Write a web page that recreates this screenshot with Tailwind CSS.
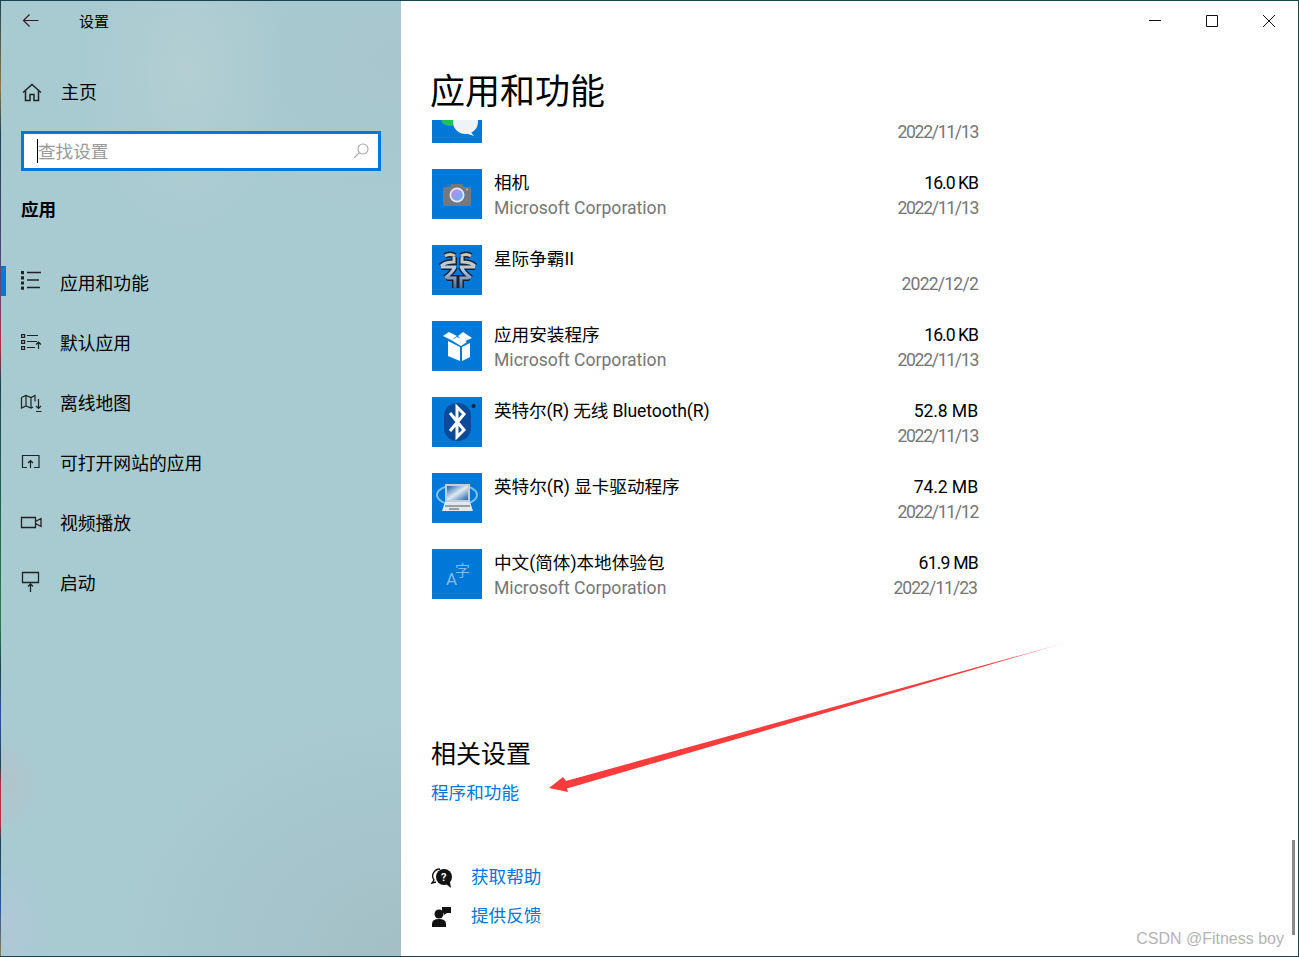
<!DOCTYPE html>
<html lang="zh-CN">
<head>
    <meta charset="UTF-8">
    <title>设置</title>
    <script src="https://cdn.jsdelivr.net/npm/@tailwindcss/browser@4"></script>
</head>
<body class="overflow-hidden">
    <div class="relative flex h-[957px] w-[1299px] bg-[#1c4450] py-px pr-px font-['Roboto','Noto_Sans_CJK_SC',sans-serif] text-[17.6px] text-black">
        <!-- desktop showing through at the left edge -->
        <div class="w-px shrink-0 bg-[linear-gradient(180deg,#1c4450_0%,#8a7a50_9%,#1c4450_14%,#5a4a80_30%,#b03040_36%,#1c4450_40%,#2a7a50_65%,#1c4450_70%,#3050a0_75%,#1c4450_80%,#b03040_82%,#b03040_86%,#1c4450_88%,#2a5a9a_95%,#8a7a50_100%)]"></div>

        <!-- Sidebar -->
        <aside class="w-[400px] shrink-0 bg-[#a8cad1] bg-[radial-gradient(ellipse_100px_160px_at_185px_70px,#b3cfd3,transparent),radial-gradient(ellipse_40px_50px_at_0px_785px,#b4c2ca,transparent),radial-gradient(ellipse_50px_65px_at_0px_925px,#b0c7d7,transparent),radial-gradient(ellipse_280px_240px_at_400px_955px,#a4bfc6,transparent),radial-gradient(ellipse_220px_150px_at_400px_60px,#a8c6cd,transparent)]">
            <div class="flex h-[40px] items-center">
                <svg class="ml-[18px] h-[24px] w-[24px]" viewBox="0 0 24 24" fill="none" stroke="#222" stroke-width="1.2"><path d="M19.5 11.5H4.5M10.5 5.5l-6 6 6 6"/></svg>
                <span class="ml-[36px] pt-[2px] text-[15px]">设置</span>
            </div>
            <div class="mt-[21px] flex h-[60px] items-center">
                <svg class="ml-[18px] h-[24px] w-[24px]" viewBox="0 0 24 24" fill="none" stroke="#222" stroke-width="1.5"><path d="M4 12.5 13 4.5l9 8M6.500 10.500v10H11v-6h4v6h4.500v-10"/></svg>
                <span class="ml-[18px] pt-px text-[18px]">主页</span>
            </div>
            <div class="mx-[20px] mt-[9px] flex h-[40px] items-center border-[3px] border-[#0078d7] bg-white">
                <span class="ml-[13px] h-[24px] w-px bg-black"></span>
                <span class="flex-1 pt-[2px] text-[#999]">查找设置</span>
                <svg class="mr-[8px] h-[18px] w-[18px]" viewBox="0 0 18 18" fill="none" stroke="#aaa" stroke-width="1.100"><circle cx="11" cy="7" r="5"/><path d="M7.500 10.500 2 16"/></svg>
            </div>
            <div class="mt-[19px] flex h-[40px] items-center pl-[20px] font-bold">应用</div>
            <nav class="mt-[23px] text-[17.8px]">
                <a class="relative flex h-[60px] items-center">
                    <span class="absolute left-0 top-[13px] h-[30px] w-[5px] bg-[#0078d7]"></span>
                    <svg class="ml-[18px] h-[24px] w-[24px]" viewBox="0 0 24 24" fill="none" stroke="#222" stroke-width="1.300"><path d="M8 1.500h14M8 9h12M8 16.500h13"/><path stroke-width="3" stroke-dasharray="3.200 2" d="M3.500 0v19"/></svg>
                    <span class="ml-[17px] pt-[2px]">应用和功能</span>
                </a>
                <a class="flex h-[60px] items-center">
                    <svg class="ml-[18px] h-[24px] w-[24px]" viewBox="0 0 24 24" fill="none" stroke="#222" stroke-width="1.200"><path d="M2.600 3.600h3v2.800h-3zM2.600 9.600h3v2.800h-3zM2.600 15.600h3v2.800h-3zM8 4.500h11M8 10.500h10M8 16.500h8M19.500 18v-6.500M17 13.500l2.500-2.500 2.500 2.500"/></svg>
                    <span class="ml-[17px] pt-[2px]">默认应用</span>
                </a>
                <a class="flex h-[60px] items-center">
                    <svg class="ml-[18px] h-[24px] w-[24px]" viewBox="0 0 24 24" fill="none" stroke="#222" stroke-width="1.200"><path d="M2.500 6.500 7 4.500l5 2 4-2v6M2.500 6.500V17l4.500-2 5 2 2-1M7 4.500V15M12 6.500V17M19.500 8v9.500M17 15l2.500 2.500L22 15M17 20.500h5.500"/></svg>
                    <span class="ml-[17px] pt-[2px]">离线地图</span>
                </a>
                <a class="flex h-[60px] items-center">
                    <svg class="ml-[18px] h-[24px] w-[24px]" viewBox="0 0 24 24" fill="none" stroke="#222" stroke-width="1.200"><path d="M8 16.500H3.500v-12h16.500v12H15M11.500 17V9.500M9 12l2.500-2.500L14 12"/></svg>
                    <span class="ml-[17px] pt-[2px]">可打开网站的应用</span>
                </a>
                <a class="flex h-[60px] items-center">
                    <svg class="ml-[18px] h-[24px] w-[24px]" viewBox="0 0 24 24" fill="none" stroke="#222" stroke-width="1.300"><path d="M2.500 6.500h14v10h-14zM16.500 10.500l5.500-3v8l-5.500-3"/></svg>
                    <span class="ml-[17px] pt-[2px]">视频播放</span>
                </a>
                <a class="flex h-[60px] items-center">
                    <svg class="ml-[18px] h-[24px] w-[24px]" viewBox="0 0 24 24" fill="none" stroke="#222" stroke-width="1.300"><path d="M3.500 1.500h16v10h-16zM11.500 21v-8M9 15.500l2.500-2.500 2.500 2.500"/></svg>
                    <span class="ml-[17px] pt-[2px]">启动</span>
                </a>
            </nav>
        </aside>

        <!-- Main -->
        <main class="relative flex-1 bg-white pl-[29px]">
            <div class="absolute right-[1px] top-0 flex">
                <button class="flex h-[40px] w-[57px] items-center justify-center">
                    <svg class="h-[14px] w-[14px]" viewBox="0 0 14 14" stroke="#111" stroke-width="1"><path d="M1 6.500h12"/></svg>
                </button>
                <button class="flex h-[40px] w-[57px] items-center justify-center">
                    <svg class="h-[14px] w-[14px]" viewBox="0 0 14 14" fill="none" stroke="#111" stroke-width="1"><path d="M1.500 1.500h11v11h-11z"/></svg>
                </button>
                <button class="flex h-[40px] w-[57px] items-center justify-center">
                    <svg class="h-[14px] w-[14px]" viewBox="0 0 14 14" stroke="#111" stroke-width="1"><path d="M1 1l12 12M13 1 1 13"/></svg>
                </button>
            </div>

            <h1 class="flex h-[119px] items-start pt-[67px] text-[35px] leading-[50px]">应用和功能</h1>

            <!-- App list, scrolled so the first row is cut off -->
            <div class="h-[505px] overflow-hidden">
                <ul class="ml-[2px] mt-[-27px] w-[546px]">
                    <li class="flex h-[76px]">
                        <svg class="h-[50px] w-[50px] shrink-0" viewBox="0 0 50 50"><rect width="50" height="50" fill="#0078d7"/><ellipse cx="18" cy="26" rx="9" ry="7" fill="#1cc15a"/><ellipse cx="33.500" cy="29" rx="12.500" ry="12" fill="#eef3f6"/><path d="M38 38l4 5-9-3z" fill="#eef3f6"/></svg>
                        <div class="ml-[12px] flex-1 pt-[2px] leading-[25px]"><p>&nbsp;</p></div>
                        <div class="pt-[2px] text-right leading-[25px] tracking-[-1.300px] text-[#767676]"><p>&nbsp;</p><p>2022/11/13</p></div>
                    </li>
                    <li class="flex h-[76px]">
                        <svg class="h-[50px] w-[50px] shrink-0" viewBox="0 0 50 50"><defs><linearGradient id="lens" x1="0" y1="0" x2="1" y2="1"><stop offset="0" stop-color="#c98ae8"/><stop offset="1" stop-color="#5ab4f4"/></linearGradient></defs><rect width="50" height="50" fill="#0078d7"/><path d="M11 20q0-2 2-2h4l2-3h11l2 3h5q2 0 2 2v15q0 2-2 2H13q-2 0-2-2z" fill="#75797e"/><circle cx="25" cy="26" r="7.500" fill="#e8e8f0"/><circle cx="25" cy="26" r="5.800" fill="url(#lens)"/><circle cx="35" cy="20.500" r="1" fill="#bbb"/></svg>
                        <div class="ml-[12px] flex-1 pt-[2px] leading-[25px]"><p>相机</p><p class="text-[#767676]">Microsoft Corporation</p></div>
                        <div class="pt-[2px] text-right leading-[25px]"><p class="tracking-[-1px]">16.0 KB</p><p class="tracking-[-1.300px] text-[#767676]">2022/11/13</p></div>
                    </li>
                    <li class="flex h-[76px]">
                        <svg class="h-[50px] w-[50px] shrink-0" viewBox="0 0 50 50"><defs><linearGradient id="sc" x1="0" y1="0" x2="0" y2="1"><stop offset="0" stop-color="#cfc6a8"/><stop offset=".45" stop-color="#b8cce0"/><stop offset="1" stop-color="#4a6c94"/></linearGradient><path id="scHalf" d="M13 11q5-3 10 0M22 12v5q-9 0-13 4M9 22h15M23 22q-3 6-10 11M15 33h8v10" fill="none"/></defs><rect width="50" height="50" fill="#0078d7"/><g stroke="#12233c" stroke-width="6"><use href="#scHalf"/><use href="#scHalf" transform="matrix(-1 0 0 1 52 0)"/></g><g stroke="url(#sc)" stroke-width="3"><use href="#scHalf"/><use href="#scHalf" transform="matrix(-1 0 0 1 52 0)"/></g></svg>
                        <div class="ml-[12px] flex-1 pt-[2px] leading-[25px]"><p>星际争霸II</p></div>
                        <div class="pt-[2px] text-right leading-[25px] tracking-[-0.800px] text-[#767676]"><p>&nbsp;</p><p>2022/12/2</p></div>
                    </li>
                    <li class="flex h-[76px]">
                        <svg class="h-[50px] w-[50px] shrink-0" viewBox="0 0 50 50" fill="#fff"><rect width="50" height="50" fill="#0078d7"/><path d="M16 20l12 6v14l-12-5zM30 26l8-4v14l-8 4zM11 15l6-4 8 4-6 4zM26 15l5-4 9 6-9 4zM19 19l6-3 10 5-6 4z"/></svg>
                        <div class="ml-[12px] flex-1 pt-[2px] leading-[25px]"><p>应用安装程序</p><p class="text-[#767676]">Microsoft Corporation</p></div>
                        <div class="pt-[2px] text-right leading-[25px]"><p class="tracking-[-1px]">16.0 KB</p><p class="tracking-[-1.300px] text-[#767676]">2022/11/13</p></div>
                    </li>
                    <li class="flex h-[76px]">
                        <svg class="h-[50px] w-[50px] shrink-0" viewBox="0 0 50 50"><rect width="50" height="50" fill="#0078d7"/><rect x="12" y="6" width="27" height="38" rx="13" fill="#0a4a98"/><path d="M18 16l14 17-7 7V10l7 7-14 17" fill="none" stroke="#fff" stroke-width="3"/><circle cx="41.500" cy="9" r="2" fill="#123"/></svg>
                        <div class="ml-[12px] flex-1 pt-[2px] leading-[25px]"><p class="tracking-[-0.120px]">英特尔(R) 无线 Bluetooth(R)</p></div>
                        <div class="pt-[2px] text-right leading-[25px]"><p class="tracking-[-0.100px]">52.8 MB</p><p class="tracking-[-1.300px] text-[#767676]">2022/11/13</p></div>
                    </li>
                    <li class="flex h-[76px]">
                        <svg class="h-[50px] w-[50px] shrink-0" viewBox="0 0 50 50"><defs><linearGradient id="screen" x1="0" y1="0" x2="1" y2="1"><stop offset="0" stop-color="#1f62a8"/><stop offset=".5" stop-color="#dfeaf4"/><stop offset="1" stop-color="#1f62a8"/></linearGradient></defs><rect width="50" height="50" fill="#0078d7"/><ellipse cx="25" cy="22" rx="20" ry="10" fill="none" stroke="#7ec0ee" stroke-width="2"/><rect x="13" y="11" width="25" height="18" fill="#c4ced8"/><rect x="15" y="13" width="21" height="14" fill="url(#screen)"/><path d="M13 29h25l3 9H10z" fill="#e4e8ec"/><path d="M13 33h25M17 36h10" stroke="#555" stroke-width="1.200"/></svg>
                        <div class="ml-[12px] flex-1 pt-[2px] leading-[25px]"><p>英特尔(R) 显卡驱动程序</p></div>
                        <div class="pt-[2px] text-right leading-[25px]"><p class="tracking-[-0.100px]">74.2 MB</p><p class="tracking-[-1.300px] text-[#767676]">2022/11/12</p></div>
                    </li>
                    <li class="flex h-[76px]">
                        <svg class="h-[50px] w-[50px] shrink-0" viewBox="0 0 50 50" fill="#7fbdf0"><rect width="50" height="50" fill="#0078d7"/><text x="14" y="36" font-size="17">A</text><text x="23" y="27" font-size="15">字</text></svg>
                        <div class="ml-[12px] flex-1 pt-[2px] leading-[25px]"><p>中文(简体)本地体验包</p><p class="text-[#767676]">Microsoft Corporation</p></div>
                        <div class="pt-[2px] text-right leading-[25px]"><p class="tracking-[-0.800px]">61.9 MB</p><p class="mr-px tracking-[-1px] text-[#767676]">2022/11/23</p></div>
                    </li>
                </ul>
            </div>

            <h2 class="ml-px mt-[112px] h-[36px] text-[25px] leading-[36px]">相关设置</h2>
            <a class="ml-px mt-[5px] block h-[30px] leading-[30px] text-[#0078d7]">程序和功能</a>

            <div class="ml-px mt-[50px] flex h-[39px] items-center">
                <svg class="h-[22px] w-[22px]" viewBox="0 0 22 22"><path d="M9 2a7.500 7 0 0 0-6 11l-2 3 4-1" fill="none" stroke="#111" stroke-width="1.300"/><circle cx="13" cy="10" r="8" fill="#111"/><path d="M15 17l5 4-1-6z" fill="#111"/><text x="10" y="14" font-size="11" font-weight="700" fill="#fff">?</text></svg>
                <span class="ml-[18px] text-[#0078d7]">获取帮助</span>
            </div>
            <div class="ml-px flex h-[39px] items-center">
                <svg class="h-[22px] w-[22px]" viewBox="0 0 22 22" fill="#111"><circle cx="8" cy="8" r="4.500"/><path d="M1 21v-3q0-5 7-5t7 5v3zM11 1h9v6h-4l-3 2V7h-2z"/></svg>
                <span class="ml-[18px] text-[#0078d7]">提供反馈</span>
            </div>

            <div class="absolute right-[3px] top-[839px] h-[95px] w-[3px] bg-[#8a8a8a]"></div>
            <div class="absolute right-[14px] top-[926px] font-['Liberation_Sans',sans-serif] text-[16px] text-[#b4b4b4]">CSDN @Fitness boy</div>
        </main>

        <!-- Annotation arrow drawn over the screenshot -->
        <svg class="pointer-events-none absolute left-0 top-0 h-[957px] w-[1299px]" viewBox="0 0 1299 957"><defs><linearGradient id="tail" x1="549" y1="788" x2="1068" y2="642" gradientUnits="userSpaceOnUse"><stop offset="0.85" stop-color="#f83c3c"/><stop offset="1" stop-color="#f83c3c" stop-opacity="0.35"/></linearGradient></defs><path d="M1068 642 566 781 563 777 549 788 568 792 567 788.500z" fill="url(#tail)"/></svg>
    </div>
</body>
</html>
